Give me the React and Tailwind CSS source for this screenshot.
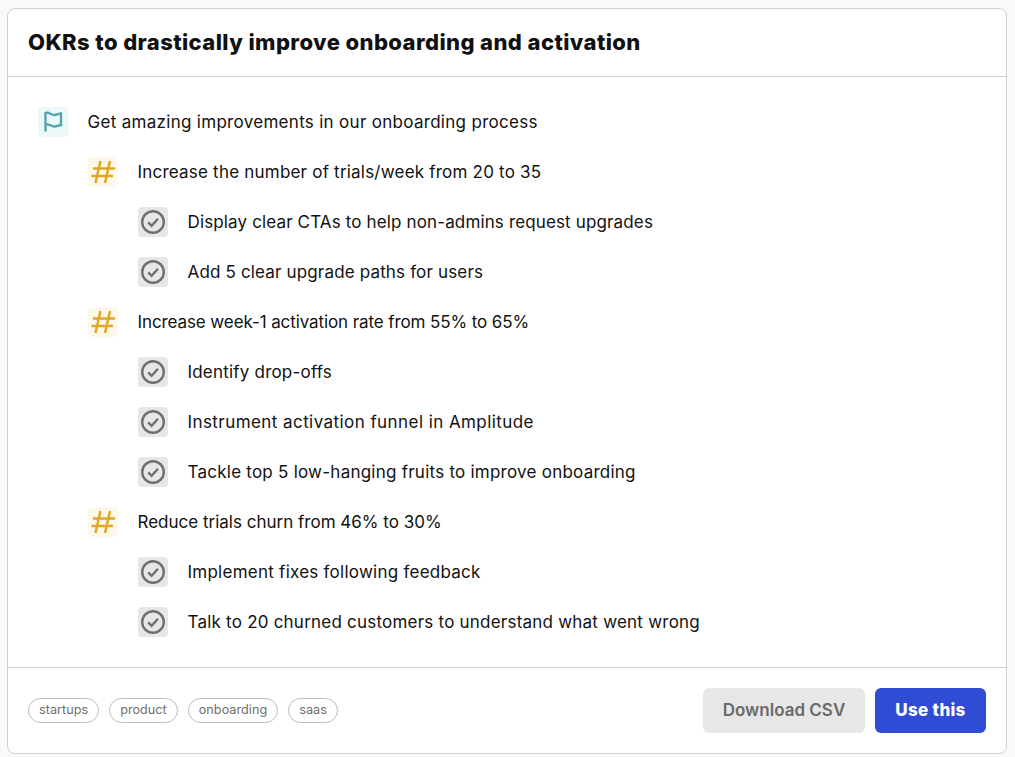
import React from "react";

const items = [
  { level: 0, kind: "objective", track: "tracking-[0.3px]", text: "Get amazing improvements in our onboarding process" },
  { level: 1, kind: "result", track: "tracking-[0.21px]", text: "Increase the number of trials/week from 20 to 35" },
  { level: 2, kind: "task", track: "tracking-[0.14px]", text: "Display clear CTAs to help non-admins request upgrades" },
  { level: 2, kind: "task", track: "tracking-[0.16px]", text: "Add 5 clear upgrade paths for users" },
  { level: 1, kind: "result", track: "tracking-[-0.1px]", text: "Increase week-1 activation rate from 55% to 65%" },
  { level: 2, kind: "task", track: "tracking-[0.2px]", text: "Identify drop-offs" },
  { level: 2, kind: "task", track: "tracking-[0.43px]", text: "Instrument activation funnel in Amplitude" },
  { level: 2, kind: "task", track: "tracking-[0.24px]", text: "Tackle top 5 low-hanging fruits to improve onboarding" },
  { level: 1, kind: "result", track: "tracking-[0px]", text: "Reduce trials churn from 46% to 30%" },
  { level: 2, kind: "task", track: "tracking-[0.25px]", text: "Implement fixes following feedback" },
  { level: 2, kind: "task", track: "tracking-[0.22px]", text: "Talk to 20 churned customers to understand what went wrong" },
];

const tags = ["startups", "product", "onboarding", "saas"];

function RowIcon({ kind }) {
  if (kind === "objective") {
    return (
      <span className="h-[30px] w-[30px] shrink-0 rounded bg-[#edf8fa] text-[#55a5ad]">
        <svg viewBox="0 0 30 30" width="30" height="30" fill="none" stroke="currentColor" strokeWidth="2.4">
          <path d="M7.5 24.5V6C11 4.8 13.5 8 16 8C18.5 8 20.5 7 23 6.5V18C20.5 18.5 18.5 19.5 16 19.5C13.5 19.5 11 16.5 7.5 17.5" />
        </svg>
      </span>
    );
  }
  if (kind === "result") {
    return (
      <span className="h-[30px] w-[30px] shrink-0 rounded bg-[#fef8ea] text-[#dfa823]">
        <svg viewBox="0 0 30 30" width="30" height="30" fill="none" stroke="currentColor" strokeWidth="2.5">
          <path d="M12.5 4L7.5 26M22 4L17 26M5 11.5H27M3.5 19H25" />
        </svg>
      </span>
    );
  }
  return (
    <span className="h-[30px] w-[30px] shrink-0 rounded bg-[#e7e7e7] text-[#6f6f6f]">
      <svg viewBox="0 0 30 30" width="30" height="30" fill="none" stroke="currentColor" strokeWidth="2.4">
        <circle cx="15" cy="15" r="10.8" />
        <path d="M10.2 15.3L13.6 18.8L20 11.8" />
      </svg>
    </span>
  );
}

function Row({ item }) {
  const indent = item.level === 0 ? "" : item.level === 1 ? "ml-[50px]" : "ml-[100px]";
  return (
    <div className={`flex h-[30px] items-center gap-[19.5px] ${indent}`}>
      <RowIcon kind={item.kind} />
      <span className={`text-[17px] leading-[30px] text-[#111111] ${item.track}`}>{item.text}</span>
    </div>
  );
}

export default function App() {
  return (
    <div className="min-h-[757px] bg-[#f9f9f9] pt-2 pr-2 pb-[3px] pl-[7px] font-['Inter',sans-serif]">
      <div className="w-[1000px] overflow-hidden rounded-lg border border-[#d0d0d0] bg-white">
        <div className="flex h-[68px] items-center border-b border-[#d0d0d0] px-5">
          <h1 className="text-[22px] font-extrabold tracking-[0.41px] text-[#111111]">
            OKRs to drastically improve onboarding and activation
          </h1>
        </div>
        <div className="flex flex-col gap-5 border-b border-[#d0d0d0] p-[30px]">
          {items.map((item) => (
            <Row key={item.text} item={item} />
          ))}
        </div>
        <div className="flex h-[85px] items-center justify-between px-5">
          <div className="flex gap-[10px]">
            {tags.map((tag) => (
              <span
                key={tag}
                className="flex h-[25px] items-center rounded-full border border-[#bdbdbd] px-[10px] pb-px text-[12.7px] text-[#6f6f6f]"
              >
                {tag}
              </span>
            ))}
          </div>
          <div className="flex gap-[10px]">
            <button className="h-[45px] w-[162px] rounded-md bg-[#e7e7e7] text-[17px] font-semibold text-[#6a6a6a]">
              Download CSV
            </button>
            <button className="h-[45px] w-[111px] rounded-md bg-[#314cd4] text-[17px] font-extrabold tracking-[0.3px] text-white">
              Use this
            </button>
          </div>
        </div>
      </div>
    </div>
  );
}
